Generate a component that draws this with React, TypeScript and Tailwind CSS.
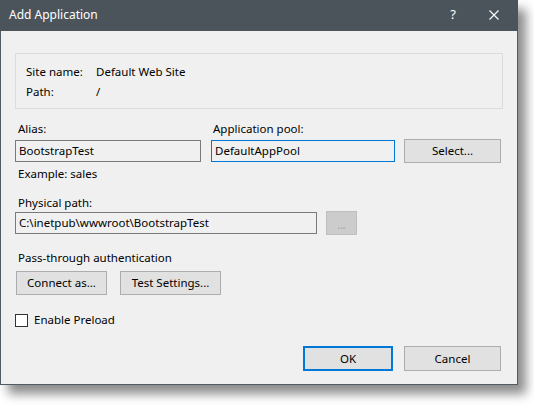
import React from 'react';

const font = { fontFamily: '"Noto Sans", "Open Sans", sans-serif' };

const Button: React.FC<{ label: string; className?: string; primary?: boolean }> = ({ label, className = '', primary }) => (
  <button
    className={`h-[24px] bg-[#e1e1e1] text-[11.5px] leading-[16px] text-black ${
      primary ? 'border-2 border-[#0078d7]' : 'border border-[#adadad]'
    } ${className}`}
  >
    {label}
  </button>
);

const TextBox: React.FC<{ value: string; className?: string; focused?: boolean }> = ({ value, className = '', focused }) => (
  <div
    className={`h-[22px] flex items-center px-[3px] bg-[#f0f0f0] border text-[11.5px] leading-[16px] text-black ${
      focused ? 'border-[#0078d7]' : 'border-[#7a7a7a]'
    } ${className}`}
  >
    {value}
  </div>
);

export default function App() {
  return (
    <div className="w-[534px] h-[415px] bg-white" style={font}>
      <div className="w-[518px] h-[385px] flex flex-col bg-[#f0f0f0] border border-t-0 border-[#535b62] shadow-[8px_9px_10px_rgba(0,0,0,0.45)]">
        {/* title bar */}
        <div className="h-[31px] -mx-px flex items-center bg-[#4b545b] text-white text-[12px] shrink-0">
          <span className="pl-[9px] flex-1 pb-[1px]">Add Application</span>
          <span className="w-[20px] text-center mr-[26px] pb-[2px] text-[13px]">?</span>
          <svg width="10" height="10" viewBox="0 0 10 10" className="mr-[19px] mb-[1px]">
            <path d="M0.5 0.5 L9.5 9.5 M9.5 0.5 L0.5 9.5" stroke="white" strokeWidth="1.1" />
          </svg>
        </div>

        <div className="pl-[14px] pr-[15px] flex flex-col text-[11.5px] leading-[16px] text-black">
          {/* site info group */}
          <div className="mt-[22px] w-[488px] h-[56px] border border-[#dcdcdc] pl-[10px] pt-[8px] leading-[20px]">
            <div className="flex">
              <span className="w-[70px]">Site name:</span>
              <span>Default Web Site</span>
            </div>
            <div className="flex">
              <span className="w-[70px]">Path:</span>
              <span>/</span>
            </div>
          </div>

          {/* alias / pool */}
          <div className="mt-[12px] flex">
            <span className="w-[196px] pl-[3px]">Alias:</span>
            <span className="pl-[2px]">Application pool:</span>
          </div>
          <div className="mt-[2px] flex items-center h-[24px]">
            <TextBox value="BootstrapTest" className="w-[186px]" />
            <TextBox value="DefaultAppPool" focused className="w-[184px] ml-[10px]" />
            <Button label="Select..." className="w-[97px] ml-[9px]" />
          </div>
          <span className="mt-[3px] pl-[3px]">Example: sales</span>

          {/* physical path */}
          <span className="mt-[13px] pl-[3px]">Physical path:</span>
          <div className="flex items-center h-[24px]">
            <TextBox value="C:\inetpub\wwwroot\BootstrapTest" className="w-[302px]" />
            <button className="ml-[9px] w-[31px] h-[24px] bg-[#cccccc] border border-[#bfbfbf] text-[#9a9a9a] text-[10px] leading-[10px] pt-[4px]">
              ...
            </button>
          </div>

          {/* auth */}
          <span className="mt-[15px] pl-[3px]">Pass-through authentication</span>
          <div className="mt-[5px] flex pl-px">
            <Button label="Connect as..." className="w-[91px]" />
            <Button label="Test Settings..." className="w-[101px] ml-[13px]" />
          </div>

          {/* preload */}
          <div className="mt-[17px] flex items-center h-[16px]">
            <span className="w-[13px] h-[13px] border border-[#333333] bg-white" />
            <span className="ml-[6px]">Enable Preload</span>
          </div>

          {/* footer */}
          <div className="mt-[18px] flex justify-end pr-[1px]">
            <Button label="OK" primary className="w-[90px] h-[25px]" />
            <Button label="Cancel" className="w-[97px] h-[25px] ml-[11px]" />
          </div>
        </div>
      </div>
    </div>
  );
}
